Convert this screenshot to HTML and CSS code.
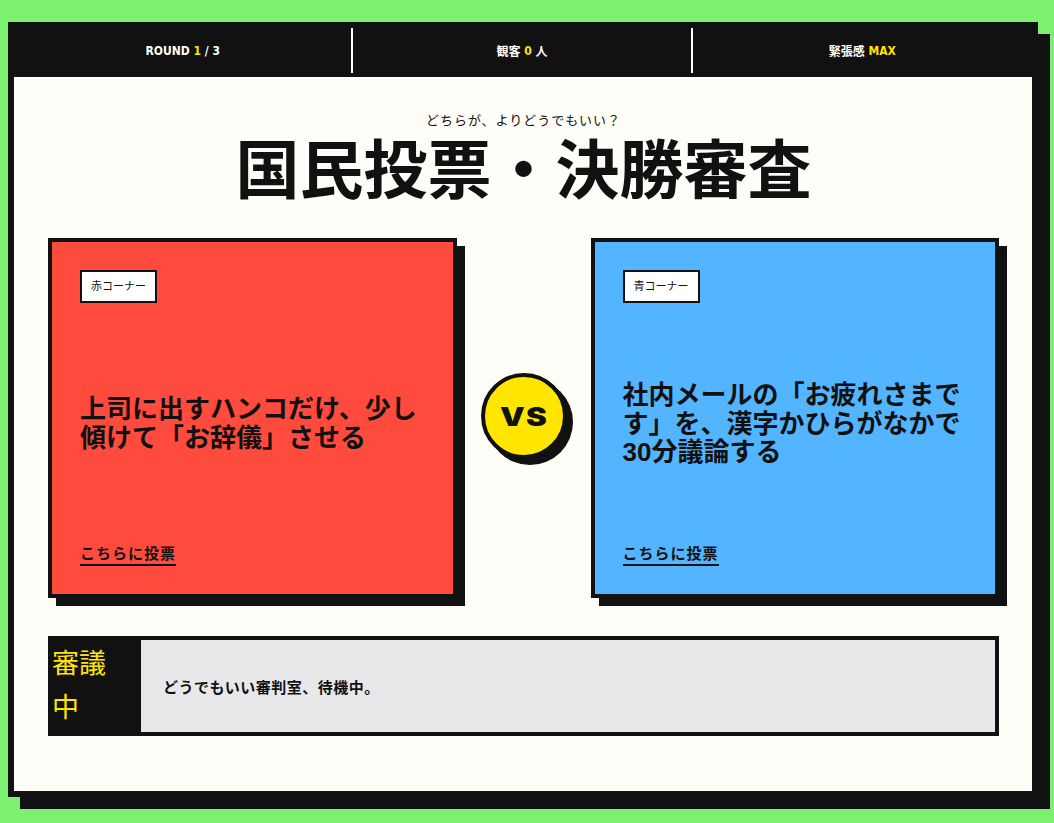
FILE: index.html
```html
<!DOCTYPE html>
<html lang="ja">
<head>
    <meta charset="UTF-8">
    <title>国民投票・決勝審査</title>
    <link rel="stylesheet" href="styles.css">
</head>
<body>
    <div class="frame">
        <div class="scoreboard">
            <div class="score-cell">ROUND <span class="hl">1</span> / 3</div>
            <div class="score-cell">観客 <span class="hl">0</span> 人</div>
            <div class="score-cell">緊張感 <span class="hl">MAX</span></div>
        </div>
        <div class="stage">
            <p class="lead">どちらが、よりどうでもいい？</p>
            <h1 class="title">国民投票・決勝審査</h1>

            <div class="arena">
                <div class="corner corner-red">
                    <span class="corner-tag">赤コーナー</span>
                    <h2 class="corner-topic">上司に出すハンコだけ、少し傾けて「お辞儀」させる</h2>
                    <a href="#" class="vote-link">こちらに投票</a>
                </div>
                <div class="vs"><span class="vs-text">VS</span></div>
                <div class="corner corner-blue">
                    <span class="corner-tag">青コーナー</span>
                    <h2 class="corner-topic">社内メールの「お疲れさまです」を、漢字かひらがなかで30分議論する</h2>
                    <a href="#" class="vote-link">こちらに投票</a>
                </div>
            </div>

            <div class="verdict">
                <div class="verdict-label">審議中</div>
                <div class="verdict-msg">どうでもいい審判室、待機中。</div>
            </div>
        </div>
    </div>
</body>
</html>
```

FILE: styles.css
```css
body {
    margin: 0;
    padding: 22px 16px 14px 8px;
    background-color: #7cf06f;
    color: #111;
    font-family: "Liberation Sans", "Noto Sans CJK JP", sans-serif;
}
.frame {
    min-height: 775px;
    box-sizing: border-box;
    border: 6px solid #111;
    background-color: #fffdf8;
    box-shadow: 12px 12px 0 #111;
}

/* top bar */
.scoreboard {
    display: grid;
    grid-template-columns: repeat(3, 1fr);
    background-color: #111;
    border-bottom: 4px solid #111;
}
.score-cell {
    height: 45px;
    display: flex;
    align-items: center;
    justify-content: center;
    border-right: 2px solid #fffdf8;
    color: #fffdf8;
    font-family: "DejaVu Sans Condensed", "Noto Sans CJK JP", sans-serif;
    font-size: 12px;
    font-weight: bold;
    white-space: pre;
}
.score-cell:last-child {
    border-right: none;
}
.hl {
    color: #ffe500;
}

.stage {
    padding: 34px 33px 0 34px;
}
.lead {
    margin: 0;
    text-align: center;
    font-size: 13px;
    line-height: 19px;
    letter-spacing: 1px;
}
.title {
    margin: 0;
    text-align: center;
    font-family: "Noto Sans CJK JP", sans-serif;
    font-size: 64px;
    line-height: 70px;
    font-weight: 700;
}

/* the two corners */
.arena {
    margin-top: 38px;
    display: grid;
    grid-template-columns: 1fr 86px 1fr;
    column-gap: 24px;
    align-items: center;
}
.corner {
    height: 360px;
    box-sizing: border-box;
    padding: 28px;
    border: 4px solid #111;
    box-shadow: 8px 8px 0 #111;
    display: flex;
    flex-direction: column;
    justify-content: space-between;
    align-items: flex-start;
}
.corner-red {
    background-color: #ff4b3e;
}
.corner-blue {
    background-color: #53b5ff;
}
.corner-tag {
    padding: 7px 9px;
    background-color: #fff;
    border: 2px solid #111;
    font-size: 11px;
    line-height: 15px;
}
.corner-topic {
    margin: 0;
    font-size: 26px;
    line-height: 1.1;
    font-weight: 700;
}
.vote-link {
    padding-bottom: 1px;
    border-bottom: 2px solid #111;
    color: #111;
    text-decoration: none;
    font-size: 15px;
    line-height: 18px;
    font-weight: 700;
    letter-spacing: 1px;
}
.vs {
    width: 86px;
    height: 86px;
    margin-top: -4px;
    box-sizing: border-box;
    border: 4px solid #111;
    border-radius: 50%;
    background-color: #ffe500;
    box-shadow: 6px 6px 0 #111;
    display: flex;
    align-items: center;
    justify-content: center;
}
.vs-text {
    display: inline-block;
    transform: scaleX(1.2);
    font-family: "Inter", sans-serif;
    font-size: 26px;
    font-weight: 900;
    letter-spacing: 1px;
}

/* status strip */
.verdict {
    margin-top: 38px;
    height: 100px;
    box-sizing: border-box;
    border: 4px solid #111;
    background-color: #111;
    display: flex;
}
.verdict-label {
    width: 89px;
    box-sizing: border-box;
    padding-right: 16px;
    display: flex;
    align-items: center;
    color: #ffe500;
    font-size: 27px;
    line-height: 44px;
}
.verdict-msg {
    flex: 1;
    padding-left: 22px;
    display: flex;
    align-items: center;
    background-color: #e8e8ea;
    font-size: 15px;
    font-weight: 700;
    letter-spacing: 0.5px;
}
```
